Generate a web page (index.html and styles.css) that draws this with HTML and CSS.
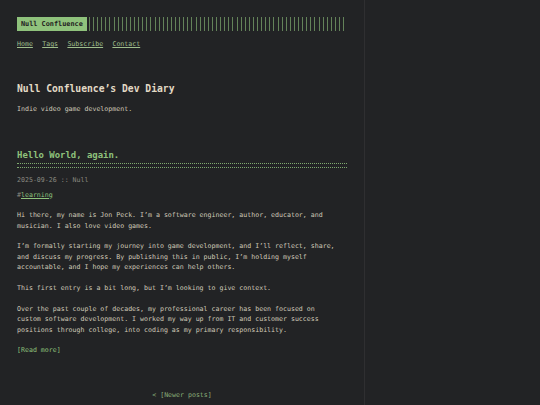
FILE: index.html
```html
<!DOCTYPE html>
<html lang="en">
<head>
  <meta charset="UTF-8" />
  <meta name="viewport" content="width=device-width, initial-scale=1.0"/>
  <title>Null Confluence's Dev Diary</title>
  <link rel="stylesheet" href="styles.css">
</head>
<body>
  <div class="container">
    <header class="header">
      <div class="header-inner">
        <a href="#" class="logo">Null Confluence</a>
        <span class="logo-bars"></span>
      </div>
      <nav class="menu">
        <a href="#">Home</a>
        <a href="#">Tags</a>
        <a href="#">Subscribe</a>
        <a href="#">Contact</a>
      </nav>
    </header>

    <div class="index-content">
      <h1>Null Confluence’s Dev Diary</h1>
      <p>Indie video game development.</p>
    </div>

    <div class="post">
      <h2 class="post-title"><a href="#">Hello World, again.</a></h2>
      <div class="post-meta">2025-09-26 :: Null</div>
      <div class="post-tags">#<a href="#">learning</a></div>

      <div class="post-content">
        <p>Hi there, my name is Jon Peck. I’m a software engineer, author, educator, and musician. I also love video games.</p>
        <p>I’m formally starting my journey into game development, and I’ll reflect, share, and discuss my progress. By publishing this in public, I’m holding myself accountable, and I hope my experiences can help others.</p>
        <p>This first entry is a bit long, but I’m looking to give context.</p>
        <p>Over the past couple of decades, my professional career has been focused on custom software development. I worked my way up from IT and customer success positions through college, into coding as my primary responsibility.</p>
      </div>

      <a href="#" class="read-more">[Read more]</a>
    </div>

    <div class="pagination">
      <a href="#">&lt; [Newer posts]</a>
    </div>
  </div>
</body>
</html>
```

FILE: styles.css
```css
* {
  box-sizing: border-box;
}

body {
  margin: 0;
  background: #222325;
  color: #cfc9b8;
  font-family: "DejaVu Sans Mono", "Liberation Mono", monospace;
  font-size: 6.6px;
  line-height: 10.4px;
}

a {
  color: #8fc27c;
}

.container {
  width: 365px;
  min-height: 100vh;
  padding: 17px 17px 0;
  border-right: 1px solid rgba(255, 255, 255, 0.06);
}

.header-inner {
  display: flex;
  align-items: stretch;
  height: 14px;
}

.logo {
  display: flex;
  align-items: center;
  padding: 0 4px;
  background: #8fc27c;
  color: #1f2021;
  font-size: 6.85px;
  font-weight: bold;
  text-decoration: none;
}

.logo-bars {
  width: 256px;
  margin-left: 2px;
  background: repeating-linear-gradient(90deg, rgba(143, 194, 124, 0.6) 0 1px, transparent 1px 4.1px);
}

.menu {
  display: flex;
  gap: 9.3px;
  margin-top: 8.4px;
}

.menu a {
  color: #9fbf8d;
}

.index-content {
  margin-top: 33px;
}

.index-content h1 {
  margin: 0;
  font-size: 9.7px;
  line-height: 12px;
  color: #e2dac6;
}

.index-content p {
  margin: 9.6px 0 0;
}

.post {
  margin-top: 34.5px;
}

.post-title {
  margin: 0;
  font-size: 8.95px;
  line-height: 12px;
}

.post-title a {
  color: #8fc27c;
  text-decoration: none;
}

.post-title::after {
  content: "";
  display: block;
  margin-top: 2px;
  height: 3px;
  border-top: 1px dotted rgba(143, 194, 124, 0.85);
  border-bottom: 1px dotted rgba(143, 194, 124, 0.85);
}

.post-meta {
  margin-top: 7px;
  color: #8a8980;
}

.post-tags {
  margin-top: 4px;
  color: #8a8980;
}

.post-content {
  margin-top: 10px;
}

.post-content p {
  max-width: 81ch;
  margin: 0 0 10.4px;
}

.read-more {
  display: inline-block;
  text-decoration: none;
}

.pagination {
  margin-top: 34.3px;
  text-align: center;
}

.pagination a {
  color: #8aae79;
  text-decoration: none;
}
```
